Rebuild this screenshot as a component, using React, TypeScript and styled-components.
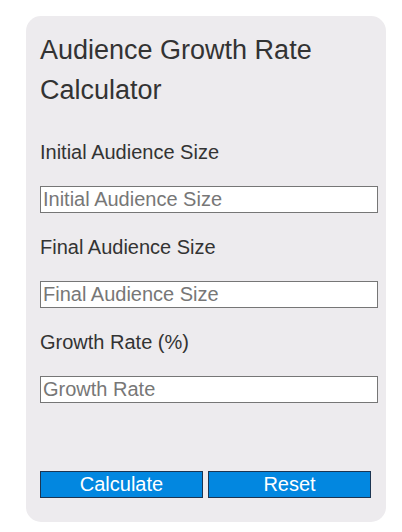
import React from 'react';
import styled, { createGlobalStyle } from 'styled-components';

const GlobalStyle = createGlobalStyle`
  body {
    margin: 0;
    background: #ffffff;
    font-family: "Liberation Sans", Arial, sans-serif;
  }
`;

const fields = [
  { label: 'Initial Audience Size', placeholder: 'Initial Audience Size' },
  { label: 'Final Audience Size', placeholder: 'Final Audience Size' },
  { label: 'Growth Rate (%)', placeholder: 'Growth Rate' },
];

const SPage = styled.div`
  padding: 16px 0 10px 26px;
`;

const SCard = styled.div`
  box-sizing: border-box;
  width: 360px;
  padding: 14px 14px 24px;
  background-color: #edebee;
  border-radius: 15px;
`;

const STitle = styled.h1`
  margin: 0 0 32px;
  font-size: 27px;
  font-weight: normal;
  line-height: 40px;
  color: #333333;
`;

const SField = styled.div<{ $last?: boolean }>`
  margin-bottom: ${(props) => (props.$last ? '0' : '24px')};
`;

const SLabel = styled.label`
  display: block;
  font-size: 20px;
  line-height: 21px;
  color: #333333;
  margin-bottom: 23px;
`;

const SInput = styled.input`
  display: block;
  box-sizing: content-box;
  width: 100%;
  height: 21px;
  margin: 0;
  padding: 2px;
  border: 1px solid #767676;
  border-radius: 0;
  background: #ffffff;
  font-family: "Liberation Sans", Arial, sans-serif;
  font-size: 20px;
  color: #333333;
  outline: none;
  &::placeholder {
    color: #777777;
  }
`;

const SButtons = styled.div`
  display: flex;
  gap: 5px;
  margin-top: 68px;
`;

const SButton = styled.button`
  box-sizing: border-box;
  width: 163px;
  height: 27px;
  padding: 0;
  border: 1px solid #1c3552;
  background-color: #0287e0;
  color: #ffffff;
  font-family: "Liberation Sans", Arial, sans-serif;
  font-size: 20px;
  line-height: 25px;
  cursor: pointer;
`;

const App = () => {
  return (
    <>
      <GlobalStyle />
      <SPage>
        <SCard>
          <STitle>Audience Growth Rate Calculator</STitle>
          {fields.map((el, index) => {
            return (
              <SField key={index} $last={index === fields.length - 1}>
                <SLabel>{el.label}</SLabel>
                <SInput type="number" placeholder={el.placeholder} />
              </SField>
            );
          })}
          <SButtons>
            <SButton>Calculate</SButton>
            <SButton>Reset</SButton>
          </SButtons>
        </SCard>
      </SPage>
    </>
  );
};

export default App;
